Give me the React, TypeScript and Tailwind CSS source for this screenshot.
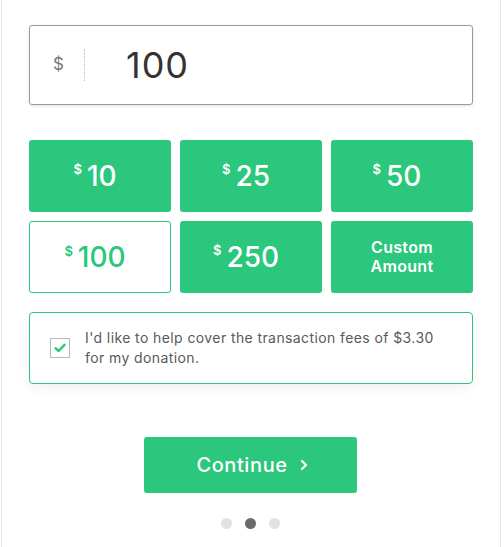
import { useState } from 'react';

const amounts = [10, 25, 50, 100, 250];

export default function App() {
  const [selected, setSelected] = useState<number | 'custom'>(100);
  const [coverFees, setCoverFees] = useState(true);
  const value = typeof selected === 'number' ? selected : '';

  return (
    <div className="w-[504px] h-[547px] bg-white font-['Inter',sans-serif]">
      <div className="h-full w-[500px] ml-px border-l border-r border-l-[#e4e6ec] border-r-[#e6e6e6] bg-white pt-[25px]">
        {/* amount input */}
        <div className="mx-[27px] h-[80px] flex items-center rounded-[3px] border border-[#9a9a9a] shadow-[0_1px_3px_rgba(0,0,0,0.12)]">
          <span className="w-[54px] pl-[23px] text-[17px] text-[#777]">$</span>
          <span className="h-[32px] border-l border-dotted border-[#bbb]" />
          <span className="ml-[41px] text-[36px] leading-none text-[#333] tracking-[1px]">{value}</span>
        </div>

        {/* preset amounts */}
        <div className="mx-[27px] mt-[35px] grid grid-cols-3 gap-x-[9px] gap-y-[9px]">
          {amounts.map(a => {
            const active = selected === a;
            return (
              <button
                key={a}
                onClick={() => setSelected(a)}
                className={
                  'h-[72px] rounded-[3px] flex items-center justify-center pr-[10px] ' +
                  (active
                    ? 'bg-white border border-[#2ac77c] text-[#2ac77c]'
                    : 'bg-[#2ac77c] text-white')
                }
              >
                <span className="text-[13px] font-semibold self-start mt-[20px] mr-[5px]">$</span>
                <span className="text-[28px] font-medium tracking-[0px]">{a}</span>
              </button>
            );
          })}
          <button
            onClick={() => setSelected('custom')}
            className="h-[72px] rounded-[3px] bg-[#2ac77c] text-white text-[16px] font-semibold leading-[19px] tracking-[0.3px]"
          >
            Custom
            <br />
            Amount
          </button>
        </div>

        {/* cover fees */}
        <label className="mx-[27px] mt-[19px] h-[72px] flex items-center rounded-[4px] border border-[#2ac77c] bg-white shadow-[0_4px_12px_rgba(0,0,0,0.06)] cursor-pointer">
          <span
            onClick={() => setCoverFees(c => !c)}
            className="ml-[20px] w-[20px] h-[20px] border border-[#b8b8b8] bg-white flex items-center justify-center shrink-0"
          >
            {coverFees && (
              <svg width="12" height="10" viewBox="0 0 12 10">
                <path d="M1.5 5.2 L4.6 8 L10.5 1.8" fill="none" stroke="#2ac77c" strokeWidth="2.4" strokeLinecap="round" strokeLinejoin="round" />
              </svg>
            )}
          </span>
          <span className="ml-[15px] text-[14px] leading-[20px] text-[#5a5a5a] tracking-[0.4px]">
            I'd like to help cover the transaction fees of $3.30
            <br />
            for my donation.
          </span>
        </label>

        {/* continue */}
        <div className="mt-[53px] flex justify-center pr-[2px]">
          <button className="w-[213px] h-[56px] rounded-[3px] bg-[#2ac77c] text-white text-[20px] font-medium tracking-[0.6px] flex items-center justify-center gap-[12px] pl-[4px]">
            Continue
            <svg width="8" height="12" viewBox="0 0 8 12">
              <path d="M2 2 L6 6 L2 10" fill="none" stroke="white" strokeWidth="2.2" strokeLinecap="round" strokeLinejoin="round" />
            </svg>
          </button>
        </div>

        {/* steps */}
        <div className="mt-[25px] flex justify-center gap-[13px] pr-[1px]">
          <span className="w-[11px] h-[11px] rounded-full bg-[#e2e2e2]" />
          <span className="w-[11px] h-[11px] rounded-full bg-[#6b6b6b]" />
          <span className="w-[11px] h-[11px] rounded-full bg-[#e2e2e2]" />
        </div>
      </div>
    </div>
  );
}
